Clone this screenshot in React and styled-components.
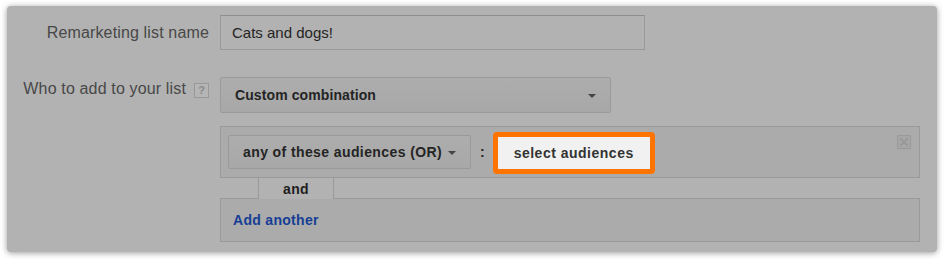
import React from 'react';
import styled, { createGlobalStyle } from 'styled-components';

const GlobalStyle = createGlobalStyle`
  body {
    margin: 0;
    background: #ffffff;
    font-family: "Liberation Sans", Arial, sans-serif;
  }
`;

const Page = styled.div`
  padding: 6px 7px 8px 7px;
  width: 930px;
`;

const Panel = styled.div`
  background: #b2b2b2;
  border-radius: 4px;
  box-shadow: 0 1px 6px rgba(0, 0, 0, 0.4);
  padding: 9px 18px 10px 0;
  display: grid;
  grid-template-columns: 202px 1fr;
  column-gap: 11px;
  row-gap: 27px;
  align-items: start;
`;

const Label = styled.div`
  display: flex;
  justify-content: flex-end;
  align-items: center;
  gap: 8px;
  height: ${props => props.$h}px;
  font-size: 16px;
  letter-spacing: 0.15px;
  color: #484848;
  padding-top: ${props => props.$offset || 0}px;
  box-sizing: border-box;
`;

const HelpIcon = styled.span`
  width: 13px;
  height: 13px;
  margin-top: 3px;
  border: 1px solid #999;
  background: #b5b5b5;
  color: #8a8a8a;
  font-size: 11px;
  font-weight: bold;
  letter-spacing: 0;
  display: flex;
  align-items: center;
  justify-content: center;
  line-height: 1;
`;

const TextInput = styled.div`
  width: 425px;
  height: 35px;
  box-sizing: border-box;
  border: 1px solid #999;
  border-top-color: #8f8f8f;
  border-radius: 1px;
  padding: 0 11px;
  display: flex;
  align-items: center;
  font-size: 15px;
  color: #242424;
`;

const Field = styled.div`
  display: flex;
  flex-direction: column;
`;

const Select = styled.div`
  width: ${props => props.$w}px;
  height: ${props => props.$h}px;
  box-sizing: border-box;
  border: 1px solid #9a9a9a;
  border-radius: 2px;
  background: linear-gradient(#adadad, #a8a8a8);
  display: flex;
  align-items: center;
  justify-content: ${props => (props.$spread ? 'space-between' : 'flex-start')};
  gap: 6px;
  padding: 0 14px;
  font-size: 14px;
  font-weight: bold;
  letter-spacing: ${props => (props.$spread ? '0.1px' : '0.4px')};
  color: #242424;
  white-space: nowrap;
`;

const Arrow = styled.span`
  width: 0;
  height: 0;
  border-left: 4px solid transparent;
  border-right: 4px solid transparent;
  border-top: 4px solid #444;
  margin-top: 1px;
`;

const RuleBox = styled.div`
  position: relative;
  margin-top: 13px;
  width: 700px;
  height: 52px;
  box-sizing: border-box;
  border: 1px solid #9a9a9a;
  background: #ababab;
  display: flex;
  align-items: center;
  padding: 0 7px;
`;

const Colon = styled.span`
  font-size: 14px;
  font-weight: bold;
  color: #242424;
  margin: 0 8px 0 9px;
`;

const HighlightButton = styled.div`
  border: 5px solid #ff7400;
  border-radius: 4px;
  width: 152px;
  height: 32px;
  margin-top: 2px;
  background: #f1f1f1;
  display: flex;
  align-items: center;
  justify-content: center;
  font-size: 14px;
  font-weight: bold;
  letter-spacing: 0.5px;
  color: #333;
`;

const CloseIcon = styled.svg`
  position: absolute;
  top: 8px;
  right: 8px;
`;

const TabRow = styled.div`
  display: flex;
  height: 21px;
  width: 700px;
`;

const TabSpacer = styled.div`
  width: ${props => (props.$w ? `${props.$w}px` : 'auto')};
  flex: ${props => (props.$w ? 'none' : '1')};
  border-bottom: 1px solid #9a9a9a;
`;

const Tab = styled.div`
  width: 74px;
  border-left: 1px solid #9a9a9a;
  border-right: 1px solid #9a9a9a;
  display: flex;
  align-items: center;
  justify-content: center;
  font-size: 14px;
  font-weight: bold;
  letter-spacing: 0.3px;
  color: #1e1e1e;
  padding-top: 1px;
`;

const AddBox = styled.div`
  width: 700px;
  height: 43px;
  box-sizing: border-box;
  border: 1px solid #9a9a9a;
  border-top: none;
  background: #ababab;
  display: flex;
  align-items: center;
  padding: 0 12px;
  font-size: 14px;
  font-weight: bold;
  letter-spacing: 0.3px;
  color: #163e95;
`;

export default function App() {
  return (
    <Page>
      <GlobalStyle />
      <Panel>
        <Label $h={35} $offset={1}>Remarketing list name</Label>
        <TextInput>Cats and dogs!</TextInput>

        <Label $h={23}>
          Who to add to your list
          <HelpIcon>?</HelpIcon>
        </Label>
        <Field>
          <Select $w={391} $h={36} $spread>
            Custom combination
            <Arrow />
          </Select>
          <RuleBox>
            <Select $w={243} $h={34}>
              any of these audiences (OR)
              <Arrow />
            </Select>
            <Colon>:</Colon>
            <HighlightButton>select audiences</HighlightButton>
            <CloseIcon width="14" height="14" viewBox="0 0 14 14">
              <rect x="0.5" y="0.5" width="13" height="13" fill="#a6a6a6" stroke="#999" />
              <path d="M3.5 3.5 L10.5 10.5 M10.5 3.5 L3.5 10.5" stroke="#999" strokeWidth="2" />
            </CloseIcon>
          </RuleBox>
          <TabRow>
            <TabSpacer $w={38} />
            <Tab>and</Tab>
            <TabSpacer />
          </TabRow>
          <AddBox>Add another</AddBox>
        </Field>
      </Panel>
    </Page>
  );
}
